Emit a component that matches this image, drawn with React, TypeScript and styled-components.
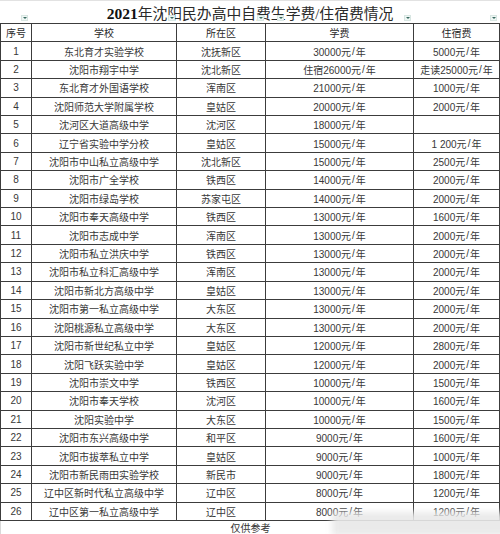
import React from 'react';
import styled, { createGlobalStyle } from 'styled-components';

const GlobalStyle = createGlobalStyle`
  html, body {
    margin: 0;
    padding: 0;
    background: #fff;
  }
  body {
    font-family: 'Liberation Sans', 'Noto Sans CJK SC', sans-serif;
  }
`;

const Sheet = styled.div`
  position: relative;
  width: 500px;
  height: 534px;
  overflow: hidden;
  background: #fff;
`;

const TitleRow = styled.div`
  position: relative;
  height: 23px;
  display: flex;
  align-items: center;
  justify-content: center;
  border-top: 1px solid #e2e2e2;
  box-sizing: border-box;
`;

const Title = styled.h1`
  margin: 0;
  font-family: 'Liberation Serif', 'Noto Sans CJK SC', serif;
  font-size: 14.8px;
  font-weight: 400;
  color: #2a2a2a;
`;

const Year = styled.b`
  font-weight: 700;
  font-size: 15.5px;
  color: #111;
`;

const FilterArrow = styled.span<{ $left: number }>`
  position: absolute;
  left: ${(p) => p.$left}px;
  top: 14px;
  width: 7px;
  height: 6px;
  background: #eef6f4;
  border: 1px solid #d8e6e2;
  box-sizing: border-box;
  &::after {
    content: '';
    position: absolute;
    left: 1px;
    top: 1px;
    border-left: 2px solid transparent;
    border-right: 2px solid transparent;
    border-top: 2px solid #3a6a60;
  }
`;

const Grid = styled.div`
  display: grid;
  grid-template-columns: 30px 144px 88px 147px 85px;
  grid-template-rows: repeat(27, 1fr);
  gap: 1px;
  padding: 1px;
  height: 498px;
  box-sizing: border-box;
  width: 500px;
  background: #3c3c3c;
`;

const Cell = styled.div<{ $head?: boolean }>`
  background: #fff;
  display: flex;
  align-items: center;
  justify-content: center;
  font-size: 10px;
  color: ${(p) => (p.$head ? '#2a2a2a' : '#383838')};
  white-space: nowrap;
  overflow: hidden;
`;

const Slash = styled.span`
  padding: 0 1px;
`;

const Footer = styled.div`
  height: 13px;
  display: flex;
  align-items: center;
  justify-content: center;
  font-size: 10px;
  color: #333;
  border-left: 1px solid #d8d8d8;
`;

const Watermark = styled.div`
  position: absolute;
  left: 332px;
  top: 512px;
  width: 175px;
  height: 24px;
  background: rgba(232, 232, 232, 0.9);
  filter: blur(3px);
`;

const rows: [string, string, string, string][] = [
  ['东北育才实验学校', '沈抚新区', '30000元/年', '5000元/年'],
  ['沈阳市翔宇中学', '沈北新区', '住宿26000元/年', '走读25000元/年'],
  ['东北育才外国语学校', '浑南区', '21000元/年', '1000元/年'],
  ['沈阳师范大学附属学校', '皇姑区', '20000元/年', '2000元/年'],
  ['沈河区大道高级中学', '沈河区', '18000元/年', ''],
  ['辽宁省实验中学分校', '皇姑区', '15000元/年', '1 200元/年'],
  ['沈阳市中山私立高级中学', '沈北新区', '15000元/年', '2500元/年'],
  ['沈阳市广全学校', '铁西区', '14000元/年', '2000元/年'],
  ['沈阳市绿岛学校', '苏家屯区', '14000元/年', '2000元/年'],
  ['沈阳市奉天高级中学', '铁西区', '13000元/年', '1600元/年'],
  ['沈阳市志成中学', '浑南区', '13000元/年', '2000元/年'],
  ['沈阳市私立洪庆中学', '铁西区', '13000元/年', '2000元/年'],
  ['沈阳市私立科汇高级中学', '浑南区', '13000元/年', '2000元/年'],
  ['沈阳市新北方高级中学', '皇姑区', '13000元/年', '2000元/年'],
  ['沈阳市第一私立高级中学', '大东区', '13000元/年', '2000元/年'],
  ['沈阳桃源私立高级中学', '大东区', '13000元/年', '2000元/年'],
  ['沈阳市新世纪私立中学', '皇姑区', '12000元/年', '2800元/年'],
  ['沈阳飞跃实验中学', '皇姑区', '12000元/年', '2000元/年'],
  ['沈阳市崇文中学', '铁西区', '10000元/年', '1500元/年'],
  ['沈阳市奉天学校', '沈河区', '10000元/年', '1600元/年'],
  ['沈阳实验中学', '大东区', '10000元/年', '1500元/年'],
  ['沈阳市东兴高级中学', '和平区', '9000元/年', '1600元/年'],
  ['沈阳市拔萃私立中学', '皇姑区', '9000元/年', '1000元/年'],
  ['沈阳市新民雨田实验学校', '新民市', '9000元/年', '1800元/年'],
  ['辽中区新时代私立高级中学', '辽中区', '8000元/年', '1200元/年'],
  ['辽中区第一私立高级中学', '辽中区', '8000元/年', '1200元/年'],
];

const headers = ['序号', '学校', '所在区', '学费', '住宿费'];
const arrows = [21, 168, 257, 277, 404, 490];

const Fee = ({ text }: { text: string }) => {
  if (!text) return null;
  const [amount, unit] = text.split('/');
  return (
    <>
      {amount}
      <Slash>/</Slash>
      {unit}
    </>
  );
};

const App = () => {
  return (
    <Sheet>
      <GlobalStyle />
      <TitleRow>
        <Title>
          <Year>2021</Year>年沈阳民办高中自费生学费/住宿费情况
        </Title>
        {arrows.map((x) => (
          <FilterArrow key={x} $left={x} />
        ))}
      </TitleRow>
      <Grid>
        {headers.map((h) => (
          <Cell key={h} $head>
            {h}
          </Cell>
        ))}
        {rows.map((r, i) => (
          <React.Fragment key={i}>
            <Cell>{i + 1}</Cell>
            <Cell>{r[0]}</Cell>
            <Cell>{r[1]}</Cell>
            <Cell>
              <Fee text={r[2]} />
            </Cell>
            <Cell>
              <Fee text={r[3]} />
            </Cell>
          </React.Fragment>
        ))}
      </Grid>
      <Footer>仅供参考</Footer>
      <Watermark />
    </Sheet>
  );
};

export default App;
